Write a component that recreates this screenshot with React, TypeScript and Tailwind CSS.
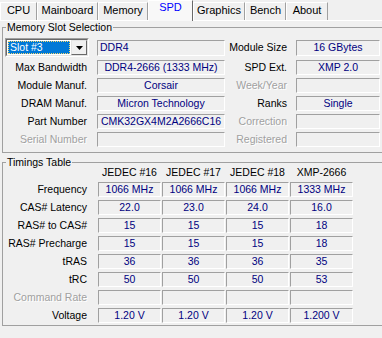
import React from 'react';

const tabs = [
  { id: 'cpu', label: 'CPU', w: 'w-[37px]' },
  { id: 'mainboard', label: 'Mainboard', w: 'w-[61px]' },
  { id: 'memory', label: 'Memory', w: 'w-[50px]' },
  { id: 'spd', label: 'SPD', w: 'w-[45px]' },
  { id: 'graphics', label: 'Graphics', w: 'w-[52px]' },
  { id: 'bench', label: 'Bench', w: 'w-[41px]' },
  { id: 'about', label: 'About', w: 'w-[42px]' },
];

const sunken = 'border border-t-[#a0a0a0] border-l-[#a0a0a0] border-b-white border-r-white';

function Field({ value = '', left = false, className = '' }: { value?: string; left?: boolean; className?: string }) {
  return (
    <div
      className={`${sunken} flex items-center overflow-hidden whitespace-nowrap text-[#000080] ${
        left ? 'justify-start pl-[2px]' : 'justify-center'
      } ${className}`}
    >
      {value}
    </div>
  );
}

function Label({ text, disabled = false, pr = 'pr-[10px]' }: { text: string; disabled?: boolean; pr?: string }) {
  return (
    <div
      className={`${pr} text-right whitespace-nowrap ${
        disabled ? 'text-[#a0a0a0] [text-shadow:1px_1px_0_#ffffff]' : 'text-black'
      }`}
    >
      {text}
    </div>
  );
}

function SlotSelect() {
  return (
    <div className="ml-[2px] flex h-[19px] w-[84px] border border-t-[#a0a0a0] border-l-[#a0a0a0] border-b-white border-r-white">
      <div className="flex flex-1 border border-t-[#696969] border-l-[#696969] border-b-[#e3e3e3] border-r-[#e3e3e3] bg-white">
        <div className="m-px flex flex-1 items-center border border-dotted border-[#f5d76e] bg-[#0078d7] pl-[1px] text-white">
          Slot #3
        </div>
        <div className="flex w-[16px] items-center justify-center border border-t-[#e3e3e3] border-l-[#e3e3e3] border-b-[#696969] border-r-[#696969] bg-[#f0f0f0]">
          <svg width="7" height="4" viewBox="0 0 7 4">
            <polygon points="0,0 7,0 3.5,4" fill="#000" />
          </svg>
        </div>
      </div>
    </div>
  );
}

const timings = [
  { label: 'Frequency', values: ['1066 MHz', '1066 MHz', '1066 MHz', '1333 MHz'] },
  { label: 'CAS# Latency', values: ['22.0', '23.0', '24.0', '16.0'] },
  { label: 'RAS# to CAS#', values: ['15', '15', '15', '18'] },
  { label: 'RAS# Precharge', values: ['15', '15', '15', '18'] },
  { label: 'tRAS', values: ['36', '36', '36', '35'] },
  { label: 'tRC', values: ['50', '50', '50', '53'] },
  { label: 'Command Rate', values: ['', '', '', ''], disabled: true },
  { label: 'Voltage', values: ['1.20 V', '1.20 V', '1.20 V', '1.200 V'] },
];

export default function App() {
  return (
    <div className="h-[338px] w-[382px] overflow-hidden bg-[#f0f0f0] font-['Liberation_Sans',Arial,sans-serif] text-[10.5px] leading-[13px] text-black">
      <div className="w-[400px]">
        {/* Tabs */}
        <div className="flex h-[21px] items-end border-b border-white">
          {tabs.map((tab) =>
            tab.id === 'spd' ? (
              <div
                key={tab.id}
                className={`${tab.w} relative -mb-px flex h-[21px] justify-center border-t border-l border-r border-t-white border-l-white border-r-[#696969] bg-[#f8f8f8] text-[11px] text-[#0000ff]`}
              >
                {tab.label}
              </div>
            ) : (
              <div
                key={tab.id}
                className={`${tab.w} flex h-[18px] justify-center border-t border-l border-r border-t-white border-l-white border-r-[#a0a0a0] pt-px text-[11px]`}
              >
                {tab.label}
              </div>
            )
          )}
        </div>

        {/* Memory Slot Selection */}
        <fieldset className="ml-[2px] w-[396px] border border-[#a0a0a0] pt-[4px] pb-[5px]">
          <legend className="ml-[3px] px-px">Memory Slot Selection</legend>
          <div className="grid grid-cols-[94px_128px_71px_84px] grid-rows-[19px_15px_15px_15px_15px_15px] items-center gap-y-[3px]">
            <SlotSelect />
            <Field value="DDR4" left className="h-[16px]" />
            <Label text="Module Size" pr="pr-[9px]" />
            <Field value="16 GBytes" className="h-[16px]" />

            <Label text="Max Bandwidth" />
            <Field value="DDR4-2666 (1333 MHz)" className="h-full" />
            <Label text="SPD Ext." pr="pr-[9px]" />
            <Field value="XMP 2.0" className="h-full" />

            <Label text="Module Manuf." />
            <Field value="Corsair" className="h-full" />
            <Label text="Week/Year" disabled pr="pr-[9px]" />
            <Field className="h-full" />

            <Label text="DRAM Manuf." />
            <Field value="Micron Technology" className="h-full" />
            <Label text="Ranks" pr="pr-[9px]" />
            <Field value="Single" className="h-full" />

            <Label text="Part Number" />
            <Field value="CMK32GX4M2A2666C16" className="h-full" />
            <Label text="Correction" disabled pr="pr-[9px]" />
            <Field className="h-full" />

            <Label text="Serial Number" disabled />
            <Field className="h-full" />
            <Label text="Registered" disabled pr="pr-[9px]" />
            <Field className="h-full" />
          </div>
        </fieldset>

        {/* Timings Table */}
        <fieldset className="mt-[3px] ml-[2px] w-[396px] border border-[#a0a0a0] pb-[2px]">
          <legend className="ml-[3px] px-px">Timings Table</legend>
          <div className="-mt-[3px] grid grid-cols-[94px_63px_63px_63px_63px] auto-rows-[15px] grid-rows-[13px] items-center gap-x-px gap-y-[3px]">
            <div />
            {['JEDEC #16', 'JEDEC #17', 'JEDEC #18', 'XMP-2666'].map((h) => (
              <div key={h} className="text-center whitespace-nowrap">
                {h}
              </div>
            ))}
            {timings.map((row) => (
              <React.Fragment key={row.label}>
                <Label text={row.label} disabled={row.disabled} />
                {row.values.map((v, i) => (
                  <Field key={i} value={v} className="h-full" />
                ))}
              </React.Fragment>
            ))}
          </div>
        </fieldset>
      </div>
    </div>
  );
}
